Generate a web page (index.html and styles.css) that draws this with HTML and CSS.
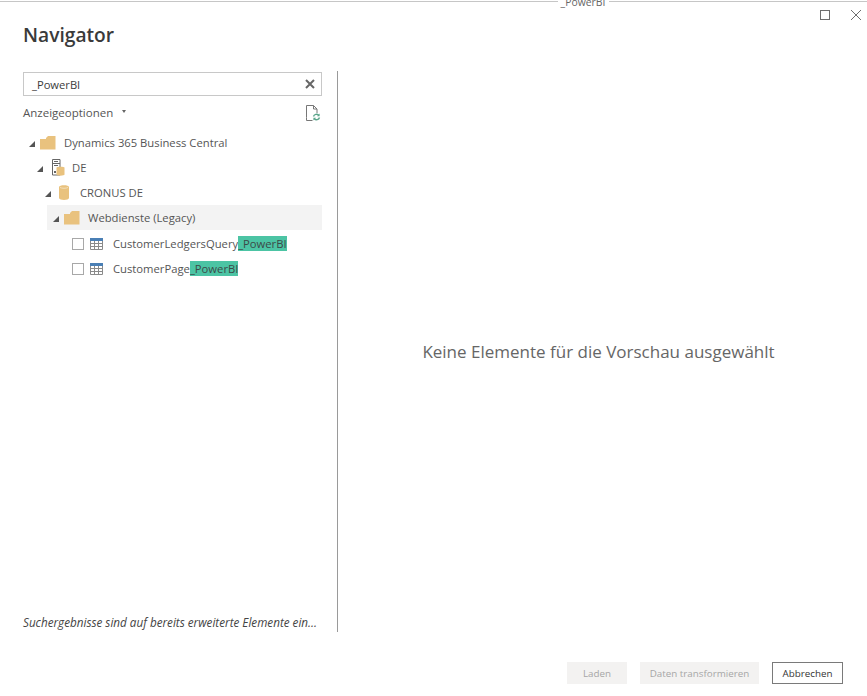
FILE: index.html
```html
<!DOCTYPE html>
<html lang="de">
<head>
<meta charset="utf-8">
<title>Navigator</title>
<link rel="stylesheet" href="styles.css">
</head>
<body>
<div class="window">
  <div class="topline"><span class="rule rule-left"></span><span class="doc-title"><span>_PowerBI</span></span><span class="rule rule-right"></span></div>
  <div class="controls">
    <svg class="ctl" width="12" height="12" viewBox="0 0 12 12"><rect x="1.5" y="1.5" width="9" height="9" fill="none" stroke="#6e6e6e"/></svg>
    <svg class="ctl" width="12" height="12" viewBox="0 0 12 12"><path d="M1 1l10 10M11 1L1 11" fill="none" stroke="#6e6e6e"/></svg>
  </div>
  <h1 class="title">Navigator</h1>
  <div class="main">
    <div class="left">
      <div class="search"><span>_PowerBI</span>
        <svg width="10" height="10" viewBox="0 0 10 10"><path d="M1 1l8 8M9 1L1 9" fill="none" stroke="#666" stroke-width="2"/></svg>
      </div>
      <div class="options">
        <span class="opt-label">Anzeigeoptionen</span><span class="caret"></span>
        <svg class="refresh" width="16" height="18" viewBox="0 0 16 18">
          <path d="M1.500 13.500V1.500h7l3.500 3.500v4M8.500 1.500v3.500H12M1.500 13.500v3h6" fill="none" stroke="#777"/>
          <path d="M8.500 12.500a3 3 0 0 1 5.200-1.200M14.500 13.500a3 3 0 0 1-5.200 1.200" fill="none" stroke="#5aa58a" stroke-width="1.400"/>
          <path d="M14.600 9.600v2.600h-2.600zM8.400 16.400v-2.600h2.600z" fill="#5aa58a"/>
        </svg>
      </div>
      <ul class="tree">
        <li class="row lvl0"><span class="tri"></span>
          <svg class="ic folder" width="16" height="14" viewBox="0 0 16 14"><path d="M0 3h6l0-1 2-2h7.500v13.500H0z" fill="#e9c27e"/></svg>
          <span class="lbl">Dynamics 365 Business Central</span></li>
        <li class="row lvl1"><span class="tri"></span>
          <svg class="ic server" width="13" height="17" viewBox="0 0 13 17"><path d="M.5.500h7.500v15.500H.5zM.5 4.500h7.500M2 2.500h4M2 6.500h4" fill="none" stroke="#666"/><rect x="2" y="12" width="2" height="2" fill="#666"/><path d="M4.500 8.500c0-1 8-1 8 0v7c0 1.500-8 1.500-8 0z" fill="#e9c27e"/></svg>
          <span class="lbl">DE</span></li>
        <li class="row lvl2"><span class="tri"></span>
          <svg class="ic cyl" width="10" height="15" viewBox="0 0 10 15"><path d="M0 2c0-2.500 10-2.500 10 0v11c0 2.500-10 2.500-10 0z" fill="#e9c27e"/><path d="M1 2.500c2 1 6 1 8 0" fill="none" stroke="#f4e0bb"/></svg>
          <span class="lbl">CRONUS DE</span></li>
        <li class="row lvl3 selected"><span class="tri"></span>
          <svg class="ic folder" width="16" height="14" viewBox="0 0 16 14"><path d="M0 3h6l0-1 2-2h7.500v13.500H0z" fill="#e9c27e"/></svg>
          <span class="lbl">Webdienste (Legacy)</span></li>
        <li class="row leaf first"><span class="check"></span>
          <svg class="ic table" width="13" height="12" viewBox="0 0 13 12"><rect width="13" height="3" fill="#4a7fb5"/><path d="M.5 3v8.500h12V3M.5 5.500h12M.5 8.500h12M4.500 3v8.500M8.500 3v8.500" fill="none" stroke="#8a8a8a"/></svg>
          <span class="lbl">CustomerLedgersQuery<mark>_PowerBI</mark></span></li>
        <li class="row leaf"><span class="check"></span>
          <svg class="ic table" width="13" height="12" viewBox="0 0 13 12"><rect width="13" height="3" fill="#4a7fb5"/><path d="M.5 3v8.500h12V3M.5 5.500h12M.5 8.500h12M4.500 3v8.500M8.500 3v8.500" fill="none" stroke="#8a8a8a"/></svg>
          <span class="lbl">CustomerPage<mark>_PowerBI</mark></span></li>
      </ul>
      <p class="note">Suchergebnisse sind auf bereits erweiterte Elemente ein...</p>
    </div>
    <div class="preview">Keine Elemente für die Vorschau ausgewählt</div>
  </div>
  <div class="footer">
    <button class="btn off btn-load" type="button">Laden</button>
    <button class="btn off btn-transform" type="button">Daten transformieren</button>
    <button class="btn cancel" type="button">Abbrechen</button>
  </div>
</div>
</body>
</html>
```
FILE: styles.css
```css
* { box-sizing: border-box; }
html, body { margin: 0; padding: 0; background: #fff; }
body { font-family: "Open Sans", "Noto Sans", sans-serif; color: #555; font-size: 11.25px; overflow: hidden; }
.window { width: 867px; height: 696px; display: flex; flex-direction: column; overflow: hidden; }

.topline { height: 8px; display: flex; align-items: flex-start; flex: none; }
.rule { height: 1px; margin-top: 1px; background: #c6c6c6; }
.rule-left { width: 558px; }
.rule-right { flex: 1; margin-left: 1px; }
.doc-title { width: 50px; height: 8px; overflow: hidden; text-align: center; font-size: 10.4px; line-height: 10px; color: #666; }
.doc-title span { display: block; margin-top: -3px; }

.controls { height: 13px; flex: none; display: flex; justify-content: flex-end; gap: 19px; padding-right: 5px; margin-top: 1px; }
.ctl { display: block; }

.title { margin: -1px 0 0 23px; height: 50px; flex: none; font-size: 19.2px; line-height: 27px; font-weight: 600; color: #3a3a3a; }

.main { height: 561px; flex: none; display: flex; }
.left { width: 315px; margin-left: 23px; padding-right: 15px; border-right: 1px solid #9a9a9a; display: flex; flex-direction: column; flex: none; }
.search { height: 24px; margin-top: 1px; width: 299px; border: 1px solid #c8c8c8; display: flex; align-items: center; justify-content: space-between; padding: 0 6px 0 8px; font-size: 11.2px; color: #3c3c3c; flex: none; }
.options { height: 34px; display: flex; align-items: center; width: 299px; flex: none; padding-bottom: 1px; }
.opt-label { color: #555; font-size: 11.5px; }
.caret { width: 0; height: 0; margin-left: 9px; margin-top: -3px; border-left: 2.5px solid transparent; border-right: 2.5px solid transparent; border-top: 3px solid #666; }
.refresh { margin-left: auto; margin-right: 1px; }

.tree { list-style: none; margin: 0; padding: 0; width: 299px; flex: 1; }
.row { height: 25px; display: flex; align-items: center; }
.tri { width: 0; height: 0; flex: none; border-style: solid; border-width: 0 0 6px 6px; border-color: transparent transparent #555 transparent; margin-top: 2px; }
.lvl0 { padding-left: 6px; }
.lvl0 .ic { margin-left: 5px; }
.lvl0 .lbl { margin-left: 8px; }
.lvl1 { padding-left: 14px; }
.lvl1 .ic { margin-left: 9px; }
.lvl1 .lbl { margin-left: 7px; }
.lvl2 { padding-left: 22px; }
.lvl2 .ic { margin-left: 8px; }
.lvl2 .lbl { margin-left: 11px; }
.lvl3 { margin-left: 24px; padding-left: 6px; }
.lvl3 .ic { margin-left: 5px; }
.lvl3 .lbl { margin-left: 8px; }
.selected { background: #f3f3f3; }
.leaf { padding-left: 49px; }
.first { margin-top: 1px; }
.check { width: 12px; height: 12px; border: 1px solid #a8a8a8; flex: none; }
.leaf .ic { margin-left: 6px; }
.leaf .lbl { margin-left: 10px; }
.ic { flex: none; display: block; }
mark { background: #4cc4a4; color: #3c4a48; padding: 0; display: inline-block; line-height: 15px; }

.note { margin: 0 0 2px; font-style: italic; font-size: 11.7px; line-height: 16px; color: #444; white-space: nowrap; }

.preview { width: 521px; flex: none; display: flex; justify-content: center; align-items: center; font-size: 17px; color: #666; }

.footer { flex: 1; display: flex; justify-content: flex-end; padding: 30px 24px 0 0; gap: 13px; }
.btn { height: 22px; padding: 0; border: 0; font: inherit; font-size: 9.8px; background: #f3f2f1; color: #a6a6a6; }
.btn-load { width: 60px; }
.btn-transform { width: 119px; }
.cancel { width: 71px; background: #fff; border: 1px solid #7a7a7a; color: #333; }
```
